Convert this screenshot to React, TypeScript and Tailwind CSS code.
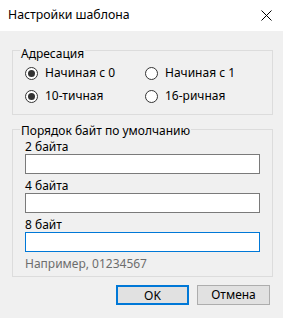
import { useState } from "react";

function Radio({ label, checked, onClick }: { label: string; checked: boolean; onClick: () => void }) {
  return (
    <button type="button" onClick={onClick} className="flex items-center gap-[7px] h-[20px] text-left">
      <span className="w-[13px] h-[13px] rounded-full border border-[#333333] bg-white flex items-center justify-center">
        {checked && <span className="w-[7px] h-[7px] rounded-full bg-[#333333]" />}
      </span>
      <span>{label}</span>
    </button>
  );
}

function Field({ label, focused }: { label: string; focused?: boolean }) {
  return (
    <div className="flex flex-col">
      <span className="h-[15px] leading-[15px]">{label}</span>
      <input
        className={
          focused
            ? "h-[20px] w-[235px] bg-white border border-[#0078d7] outline-none px-[2px]"
            : "h-[20px] w-[235px] bg-white border border-[#7a7a7a] outline-none px-[2px]"
        }
      />
    </div>
  );
}

export default function App() {
  const [start, setStart] = useState(0);
  const [base, setBase] = useState(10);

  return (
    <div
      className="w-[283px] h-[318px] bg-[#f0f0f0] text-[12px] text-black flex flex-col"
      style={{ fontFamily: '"Noto Sans", "Liberation Sans", sans-serif' }}
    >
      {/* Title bar */}
      <div className="h-[31px] bg-white flex items-center justify-between pl-[8px] pr-[11px]">
        <span className="text-[12.3px]">Настройки шаблона</span>
        <svg width="11" height="11" viewBox="0 0 11 11">
          <path d="M0.5 0.5 L10.5 10.5 M10.5 0.5 L0.5 10.5" stroke="#000" strokeWidth="1" />
        </svg>
      </div>

      <div className="px-[12px] flex flex-col">
        {/* Addressing */}
        <div className="mt-[19px] w-[261px] h-[65px] border border-[#dcdcdc] flex flex-col">
          <span className="-mt-[5px] ml-[7px] w-fit px-[1px] bg-[#f0f0f0] leading-[15px]">Адресация</span>
          <div className="mt-[2px] ml-[12px] grid grid-cols-[120px_1fr] gap-y-[3px]">
            <Radio label="Начиная с 0" checked={start === 0} onClick={() => setStart(0)} />
            <Radio label="Начиная с 1" checked={start === 1} onClick={() => setStart(1)} />
            <Radio label="10-тичная" checked={base === 10} onClick={() => setBase(10)} />
            <Radio label="16-ричная" checked={base === 16} onClick={() => setBase(16)} />
          </div>
        </div>

        {/* Byte order */}
        <div className="mt-[14px] w-[261px] h-[148px] border border-[#dcdcdc] flex flex-col">
          <span className="-mt-[6px] ml-[7px] w-fit px-[1px] bg-[#f0f0f0] h-[14px] leading-[14px]">
            Порядок байт по умолчанию
          </span>
          <div className="mt-[1px] ml-[12px] flex flex-col gap-[4px]">
            <Field label="2 байта" />
            <Field label="4 байта" />
            <Field label="8 байт" focused />
          </div>
          <span className="ml-[12px] mt-[4px] h-[15px] leading-[15px] text-[#6d6d6d]">Например, 01234567</span>
        </div>

        {/* Buttons */}
        <div className="mt-[8px] flex justify-end gap-[8px] pr-[1px]">
          <button type="button" className="w-[73px] h-[20px] bg-[#e1e1e1] border-2 border-[#0078d7]">
            OK
          </button>
          <button type="button" className="w-[73px] h-[20px] bg-[#e1e1e1] border border-[#adadad]">
            Отмена
          </button>
        </div>
      </div>
    </div>
  );
}
